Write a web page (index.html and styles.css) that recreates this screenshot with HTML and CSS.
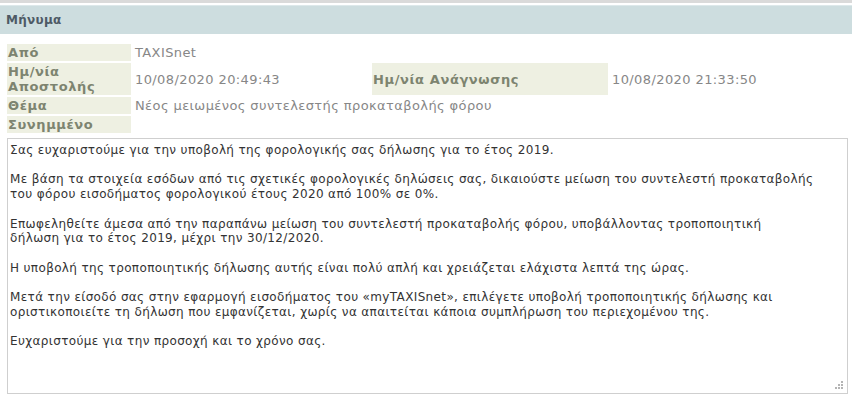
FILE: index.html
```html
<!DOCTYPE html>
<html lang="el">
<head>
  <meta charset="utf-8">
  <title>Μήνυμα</title>
  <link rel="stylesheet" href="styles.css">
</head>
<body>
  <div class="topline"></div>
  <div class="panel">
    <div class="panel-title">Μήνυμα</div>

    <table class="msg-meta">
      <colgroup>
        <col class="c-label1"><col class="c-value1"><col class="c-label2"><col>
      </colgroup>
      <tr>
        <th>Από</th>
        <td>TAXISnet</td>
        <td class="blank"></td>
        <td class="blank"></td>
      </tr>
      <tr>
        <th>Ημ/νία Αποστολής</th>
        <td>10/08/2020 20:49:43</td>
        <th>Ημ/νία Ανάγνωσης</th>
        <td>10/08/2020 21:33:50</td>
      </tr>
      <tr>
        <th>Θέμα</th>
        <td colspan="3">Νέος μειωμένος συντελεστής προκαταβολής φόρου</td>
      </tr>
      <tr>
        <th>Συνημμένο</th>
        <td colspan="3"></td>
      </tr>
    </table>

    <div class="msg-wrap">
      <textarea class="msg-body" wrap="off" readonly>Σας ευχαριστούμε για την υποβολή της φορολογικής σας δήλωσης για το έτος 2019.

Με βάση τα στοιχεία εσόδων από τις σχετικές φορολογικές δηλώσεις σας, δικαιούστε μείωση του συντελεστή προκαταβολής
του φόρου εισοδήματος φορολογικού έτους 2020 από 100% σε 0%.

Επωφεληθείτε άμεσα από την παραπάνω μείωση του συντελεστή προκαταβολής φόρου, υποβάλλοντας τροποποιητική
δήλωση για το έτος 2019, μέχρι την 30/12/2020.

Η υποβολή της τροποποιητικής δήλωσης αυτής είναι πολύ απλή και χρειάζεται ελάχιστα λεπτά της ώρας.

Μετά την είσοδό σας στην εφαρμογή εισοδήματος του «myTAXISnet», επιλέγετε υποβολή τροποποιητικής δήλωσης και
οριστικοποιείτε τη δήλωση που εμφανίζεται, χωρίς να απαιτείται κάποια συμπλήρωση του περιεχομένου της.

Ευχαριστούμε για την προσοχή και το χρόνο σας.</textarea>
      <svg class="grip" width="10" height="10" viewBox="0 0 10 10">
        <rect x="7" y="0" width="2" height="2"/>
        <rect x="4" y="3" width="2" height="2"/><rect x="7" y="3" width="2" height="2"/>
        <rect x="1" y="6" width="2" height="2"/><rect x="4" y="6" width="2" height="2"/><rect x="7" y="6" width="2" height="2"/>
      </svg>
    </div>
  </div>
</body>
</html>
```

FILE: styles.css
```css
:root {
  --font-main: Verdana, "DejaVu Sans", sans-serif;
  --bar-bg: #cddddf;
  --label-bg: #eef0e2;
  --label-text: #7d8470;
  --value-text: #878787;
  --body-text: #333;
}
* { box-sizing: border-box; }
body { margin: 0; font-family: var(--font-main); font-size: 12px; background: #fff; }
.topline { height: 3px; background: #dadada; margin-bottom: 2px; }
.panel-title { height: 29px; line-height: 29px; padding: 0 6px; background: var(--bar-bg); border-top: 1px solid #dde8ea; color: #4e5a66; font-weight: bold; letter-spacing: 0.3px; }
.msg-meta { width: 845px; margin: 8px 0 0 5px; border-spacing: 2px; table-layout: fixed; font-size: 13px; line-height: 15px; }
.c-label1 { width: 124px; }
.c-value1 { width: 237px; }
.c-label2 { width: 236px; }
.msg-meta th, .msg-meta td { padding: 1px 1px; text-align: left; vertical-align: middle; white-space: normal; }
.msg-meta th { background: var(--label-bg); color: var(--label-text); font-weight: bold; letter-spacing: 0.6px; }
.msg-meta td { color: var(--value-text); font-weight: normal; letter-spacing: 0.4px; padding-left: 2px; }
.msg-wrap { position: relative; width: 841px; margin: 3px 0 0 7px; }
.msg-body { display: block; width: 100%; height: 256px; padding: 4px 2px; border: 1px solid #cfcfcf; font-family: var(--font-main); font-size: 12px; line-height: 14.7px; letter-spacing: 0.36px; color: var(--body-text); overflow: hidden; resize: none; }
.grip { position: absolute; right: 4px; bottom: 3px; fill: #b4b4b4; }
```
